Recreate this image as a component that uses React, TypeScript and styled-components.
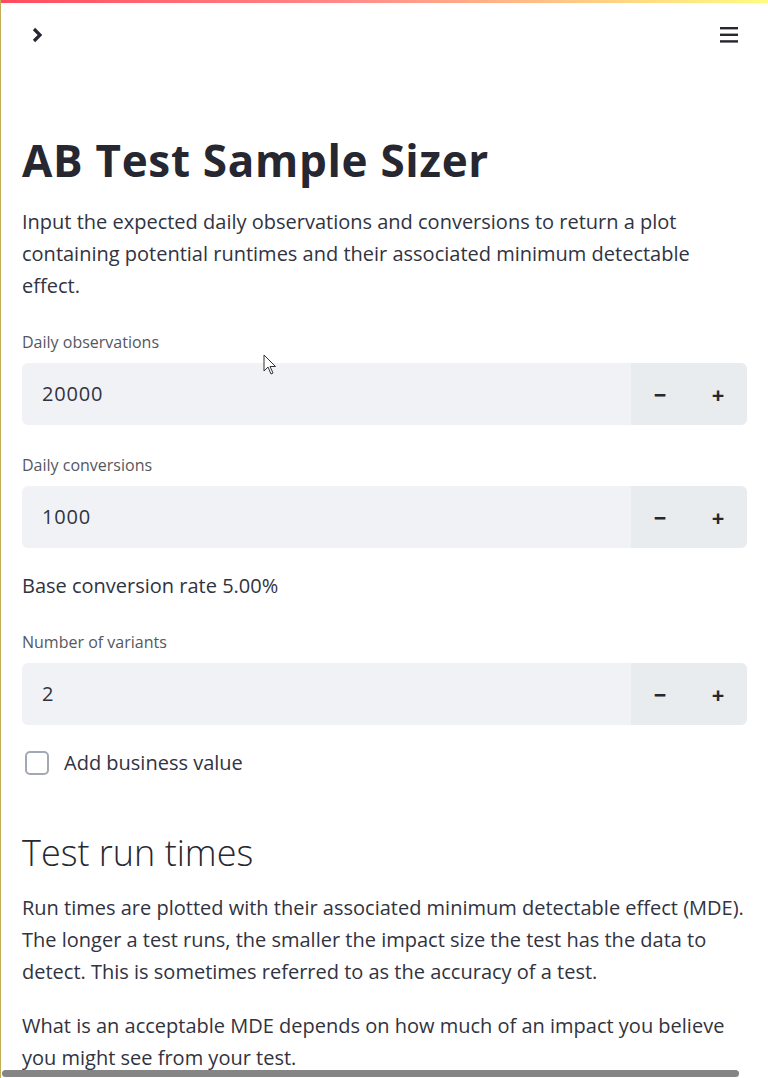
import React from 'react';
import styled, { createGlobalStyle } from 'styled-components';

const GlobalStyle = createGlobalStyle`
  html, body {
    margin: 0;
    padding: 0;
    background: #fff;
  }
  body {
    font-family: "Open Sans", "Noto Sans", sans-serif;
    color: #31333f;
  }
`;

const Frame = styled.div`
  position: relative;
  height: 1078px;
  overflow: hidden;
  border-left: 1px solid #c4ad55;
  box-sizing: border-box;
`;

const Decoration = styled.div`
  height: 3px;
  background: linear-gradient(90deg, #ff4b5e 0%, #ff8a8a 45%, #fffd80 100%);
`;

const Header = styled.header`
  display: flex;
  justify-content: space-between;
  align-items: center;
  padding: 12px 29px 0 28px;
  height: 40px;
`;

const IconButton = styled.button`
  border: none;
  background: none;
  padding: 0;
  display: flex;
  color: #262730;
  cursor: pointer;
`;

const Main = styled.main`
  padding: 79px 21px 0 21px;
`;

const Title = styled.h1`
  font-family: "Open Sans", sans-serif;
  font-weight: 700;
  font-size: 44px;
  line-height: 1.2;
  color: #262730;
  margin: 0 0 19px 0;
  letter-spacing: 0.7px;
`;

const Text = styled.p`
  font-size: 20px;
  line-height: 32px;
  margin: 0 0 22px 0;
  color: #31333f;
`;

const Field = styled.div`
  margin-bottom: 22px;
`;

const Label = styled.label`
  display: block;
  font-size: 16px;
  line-height: 20px;
  color: #55575f;
  padding-top: 8px;
  margin-bottom: 11px;
`;

const InputRow = styled.div`
  display: flex;
  height: 62px;
  border-radius: 6px;
  overflow: hidden;
  background: #f0f2f6;
`;

const NumberInput = styled.input`
  flex: 1;
  min-width: 0;
  border: none;
  background: transparent;
  font-family: "Open Sans", sans-serif;
  font-size: 20px;
  letter-spacing: 0.8px;
  color: #31333f;
  padding: 0 20px;
  outline: none;
`;

const Steps = styled.div`
  display: flex;
  width: 116px;
  background: #e9ecef;
`;

const Step = styled.button`
  flex: 1;
  border: none;
  background: transparent;
  font-family: "Open Sans", sans-serif;
  font-size: 22px;
  font-weight: 700;
  color: #262730;
  display: flex;
  align-items: center;
  justify-content: center;
  cursor: pointer;
`;

const CheckRow = styled.label`
  display: flex;
  align-items: center;
  gap: 15px;
  height: 32px;
  margin: 0 0 52px 3px;
  font-size: 20px;
  color: #31333f;
`;

const Box = styled.span`
  width: 24px;
  height: 24px;
  border: 2px solid #a3a8b4;
  border-radius: 5px;
  box-sizing: border-box;
`;

const Subtitle = styled.h2`
  font-family: "Open Sans", sans-serif;
  font-weight: 300;
  font-size: 36px;
  line-height: 1.2;
  color: #262730;
  margin: 0 0 18px 0;
`;

const Scrollbar = styled.div`
  position: absolute;
  left: 1px;
  bottom: 1px;
  width: 737px;
  height: 7px;
  border-radius: 4px;
  background: #858585;
`;

const Cursor = styled.svg`
  position: absolute;
  left: 262px;
  top: 354px;
`;

const NumberField = ({ label, value }: { label: string; value: string }) => (
  <Field>
    <Label>{label}</Label>
    <InputRow>
      <NumberInput defaultValue={value} />
      <Steps>
        <Step>−</Step>
        <Step>+</Step>
      </Steps>
    </InputRow>
  </Field>
);

export default function App() {
  return (
    <Frame>
      <GlobalStyle />
      <Decoration />
      <Header>
        <IconButton>
          <svg width="16" height="16" viewBox="0 0 16 16">
            <path d="M5 2 L11 8 L5 14" fill="none" stroke="#262730" strokeWidth="3.2" strokeLinejoin="miter" />
          </svg>
        </IconButton>
        <IconButton>
          <svg width="20" height="18" viewBox="0 0 20 18">
            <rect x="1" y="1" width="18" height="2.4" fill="#262730" />
            <rect x="1" y="7.6" width="18" height="2.4" fill="#262730" />
            <rect x="1" y="14.2" width="18" height="2.4" fill="#262730" />
          </svg>
        </IconButton>
      </Header>
      <Main>
        <Title>AB Test Sample Sizer</Title>
        <Text>
          Input the expected daily observations and conversions to return a plot containing potential
          runtimes and their associated minimum detectable effect.
        </Text>
        <NumberField label="Daily observations" value="20000" />
        <NumberField label="Daily conversions" value="1000" />
        <Text>Base conversion rate 5.00%</Text>
        <NumberField label="Number of variants" value="2" />
        <CheckRow>
          <Box />
          Add business value
        </CheckRow>
        <Subtitle>Test run times</Subtitle>
        <Text>
          Run times are plotted with their associated minimum detectable effect (MDE). The longer a
          test runs, the smaller the impact size the test has the data to detect. This is sometimes
          referred to as the accuracy of a test.
        </Text>
        <Text>
          What is an acceptable MDE depends on how much of an impact you believe you might see from
          your test.
        </Text>
      </Main>
      <Cursor width="14" height="22" viewBox="0 0 14 22">
        <path d="M1 1 L1 17 L5 13 L8 20 L10 19 L7 12.5 L12.5 12.5 Z" fill="#fff" stroke="#333" strokeWidth="1" />
      </Cursor>
      <Scrollbar />
    </Frame>
  );
}
